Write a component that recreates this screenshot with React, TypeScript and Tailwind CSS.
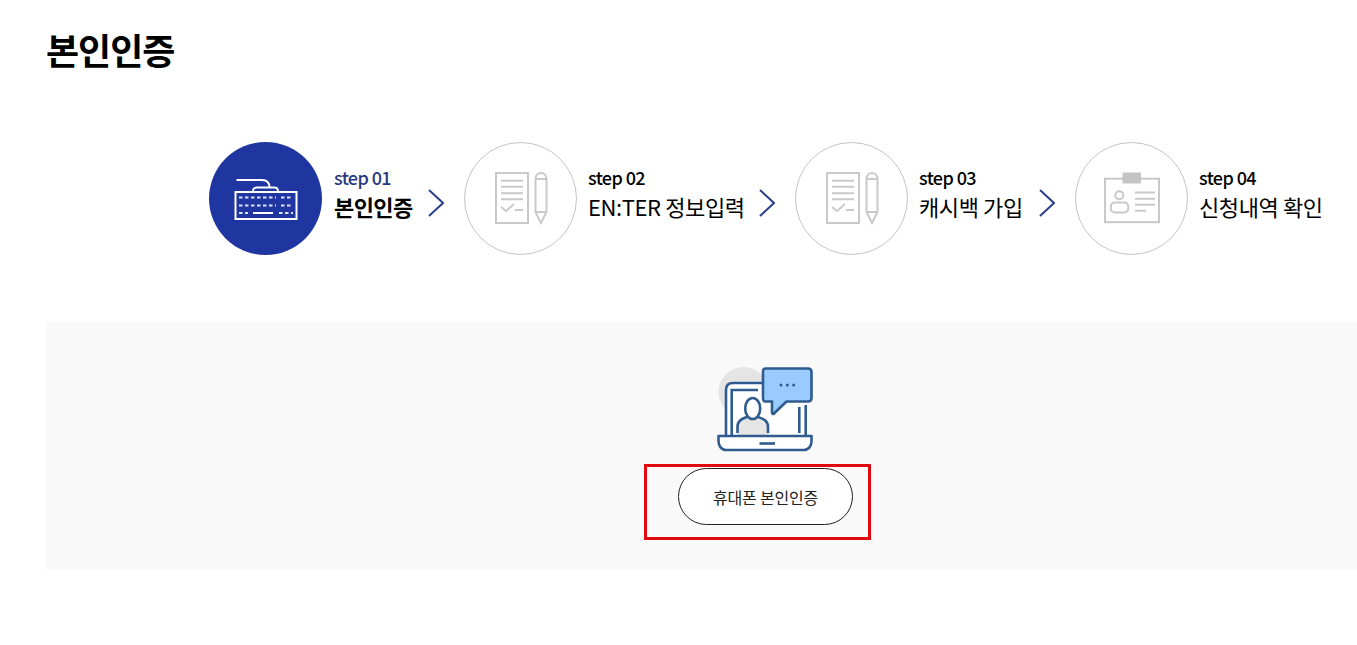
const font = "font-['Noto_Sans_CJK_KR','Noto_Sans',sans-serif]";

function Arrow() {
  return (
    <svg width="16" height="30" viewBox="0 0 16 30" fill="none" className="mt-[8px] shrink-0">
      <path d="M1 2 L15 15 L1 28" stroke="#2b3f8c" strokeWidth="2" />
    </svg>
  );
}

function KeyboardIcon() {
  return (
    <svg width="113" height="113" viewBox="0 0 113 113" fill="none" stroke="#fff">
      <path d="M27.5 38 H53 C58 38 60.5 40.5 60.5 45.5" strokeWidth="2" />
      <path d="M44 50 V49 C44 46.5 46 45.5 48 45.5 H65 C67 45.5 69 46.5 69 49 V50" strokeWidth="1.8" />
      <rect x="26.5" y="50" width="61" height="27" strokeWidth="2" />
      <path d="M30 55.5 H67 M72 55.5 H84" strokeWidth="2" strokeDasharray="3.5 2.5" opacity="0.85" />
      <path d="M30 63.5 H67 M72 63.5 H84" strokeWidth="2" strokeDasharray="3.5 2.5" opacity="0.85" />
      <path d="M30 71 H39" strokeWidth="2" strokeDasharray="3.5 2.5" opacity="0.85" />
      <path d="M44 71 H64" strokeWidth="2" />
      <path d="M70 71 H84" strokeWidth="2" strokeDasharray="3.5 2.5" opacity="0.85" />
    </svg>
  );
}

function DocIcon() {
  return (
    <svg width="111" height="111" viewBox="1 1 111 111" fill="none" stroke="#c9c9c9">
      <rect x="32" y="31" width="32" height="50" strokeWidth="2" />
      <path d="M37 38.7 H59 M37 44.7 H59 M37 51.3 H59 M37 57.3 H59" strokeWidth="2" />
      <path d="M37 65 L42 69 L50 62 M51 68 H59" strokeWidth="2" />
      <path d="M71.5 37 C71.5 29 82.5 29 82.5 37 V70 L77 81 L71.5 70 Z M71.5 37 H82.5 M71.5 70 H82.5" strokeWidth="2" />
    </svg>
  );
}

function CardIcon() {
  return (
    <svg width="111" height="111" viewBox="1 1 111 111" fill="none" stroke="#c9c9c9">
      <rect x="30" y="36.7" width="54" height="43.5" strokeWidth="2" />
      <rect x="47.5" y="30.5" width="18.5" height="11" fill="#c4c4c4" stroke="none" />
      <circle cx="44.3" cy="53.3" r="4" strokeWidth="2" />
      <rect x="35.8" y="60.5" width="17.5" height="10" rx="4" strokeWidth="2" />
      <path d="M60 50.4 H80 M60 56.7 H80 M60 62.7 H80 M60 68.7 H71" strokeWidth="2" />
    </svg>
  );
}

function LaptopIcon() {
  const line = "#2f5b8f";
  return (
    <svg width="96" height="85" viewBox="0 0 96 85" fill="none" className="block">
      <circle cx="26.5" cy="25" r="25" fill="#e5e5e5" />
      <path d="M9 69 V23 C9 18 12 16 16 16 H60 L89 38 V69 Z" fill="#fff" />
      <path d="M9 69 V23 C9 18 12 16 16 16 H46" stroke={line} strokeWidth="2.6" />
      <path d="M88.7 38 V69" stroke={line} strokeWidth="2.6" />
      <path d="M41 23 H14.7 V68" stroke={line} strokeWidth="2.6" />
      <path d="M82.3 40 V66" stroke={line} strokeWidth="2.6" />
      <path d="M20.5 68 V60 C20.5 53 27 50 36 50 C45 50 51 53 51 60 V68 Z" fill="#e5e5e5" />
      <path d="M20.5 66 V60 C20.5 53 26 51.5 30 50 M51 66 V60 C51 53 45 51.5 41 50" stroke={line} strokeWidth="2.6" />
      <ellipse cx="35.7" cy="41.5" rx="7.5" ry="10.5" fill="#fff" stroke={line} strokeWidth="2.6" />
      <path d="M1.5 69 H94.5 V74 C94.5 79 91.5 83 87 83 H9 C4.5 83 1.5 79 1.5 74 Z" fill="#fff" stroke={line} strokeWidth="2.6" strokeLinejoin="round" />
      <path d="M42.5 76.5 H58" stroke={line} strokeWidth="2.6" />
      <path d="M49 1.5 H91 C93.5 1.5 94.5 2.5 94.5 5 V31 C94.5 33.5 93.5 34.5 91 34.5 H69.5 L57 46.5 C56 47.5 55 47 55 45.5 V34.5 H49 C46.5 34.5 46 33.5 46 31 V5 C46 2.5 46.5 1.5 49 1.5 Z" fill="#99cbff" stroke={line} strokeWidth="2.6" strokeLinejoin="round" />
      <circle cx="64" cy="18" r="1.5" fill={line} />
      <circle cx="70.3" cy="18" r="1.5" fill={line} />
      <circle cx="76.7" cy="18" r="1.5" fill={line} />
    </svg>
  );
}

type Step = { no: string; label: string; icon: React.ReactNode; textClass: string; active?: boolean };

const steps: Step[] = [
  { no: "step 01", label: "본인인증", icon: <KeyboardIcon />, textClass: "ml-3 w-[94px]", active: true },
  { no: "step 02", label: "EN:TER 정보입력", icon: <DocIcon />, textClass: "ml-[11px] w-[171px]" },
  { no: "step 03", label: "캐시백 가입", icon: <DocIcon />, textClass: "ml-[11px] w-[120px]" },
  { no: "step 04", label: "신청내역 확인", icon: <CardIcon />, textClass: "ml-[11px] w-[124px]" },
];

export default function App() {
  return (
    <div className={`h-[645px] w-[1357px] overflow-hidden bg-white text-black ${font}`}>
      <div className="ml-[46px] w-[1438px]">
        <h1 className="pt-[24px] text-[36px] leading-[50px] font-bold tracking-[-1px]">본인인증</h1>

        <ul className="mt-[68px] ml-[163px] flex">
          {steps.map((s, i) => (
            <li key={s.no} className={`flex items-center ${i > 0 ? "ml-5" : ""}`}>
              <div
                className={`flex h-[113px] w-[113px] shrink-0 items-center justify-center rounded-full ${
                  s.active ? "bg-[#1f35a0]" : "border border-[#c4c4c4] bg-white"
                }`}
              >
                {s.icon}
              </div>
              <div className={`mb-[13px] whitespace-nowrap ${s.textClass}`}>
                <p className={`text-[18px] leading-[24px] font-medium tracking-[-0.6px] ${s.active ? "text-[#27387f]" : ""}`}>
                  {s.no}
                </p>
                <p className={`mt-[3px] text-[22px] leading-[28px] ${s.active ? "font-bold tracking-[-0.6px]" : "tracking-[-0.4px]"}`}>
                  {s.label}
                </p>
              </div>
              {i < steps.length - 1 && <Arrow />}
            </li>
          ))}
        </ul>

        <section className="mt-[67px] flex h-[248px] flex-col items-center bg-[#f9f9f9] pt-[45px]">
          <LaptopIcon />
          <div className="relative mt-[16px] ml-[1px]">
            <button className="h-[57px] w-[175px] rounded-full border border-[#222] bg-white text-[16px] tracking-[-0.2px] text-[#222]">
              휴대폰 본인인증
            </button>
            <div className="absolute top-[-4px] left-[-34px] h-[76px] w-[227px] border-[3px] border-[#e0090f]" />
          </div>
        </section>
      </div>
    </div>
  );
}
